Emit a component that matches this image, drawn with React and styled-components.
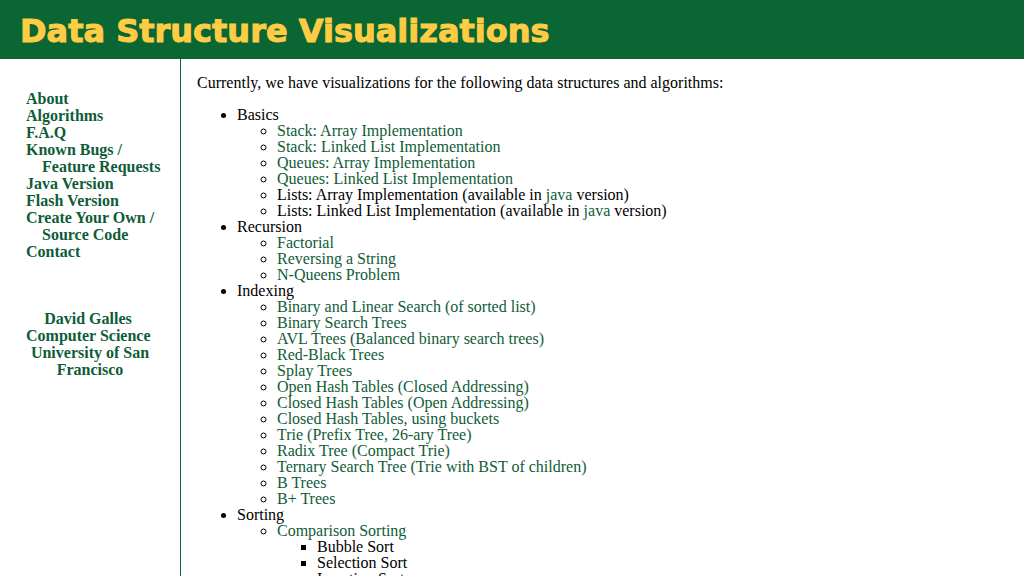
import React from "react";
import styled, { createGlobalStyle } from "styled-components";

const GlobalStyle = createGlobalStyle`
  html { scrollbar-width: none; }
  body {
    margin: 0;
    background: #ffffff;
    color: #000000;
    font: 16px/16px "Liberation Serif", serif;
  }
`;

const Page = styled.div`
  display: flex;
  flex-direction: column;
  min-height: 100vh;
`;

const Header = styled.header`
  background: #0a6633;
  padding: 11px 20px 8px;
`;

const Title = styled.h1`
  margin: 0;
  color: #ffcc44;
  font: bold 32px/40px Verdana, "DejaVu Sans", sans-serif;
  -webkit-text-stroke: 1px #ffcc44;
`;

const Body = styled.div`
  display: flex;
  flex: 1;
`;

const Sidebar = styled.aside`
  box-sizing: border-box;
  flex: none;
  width: 181px;
  padding: 31px 20px 0 26px;
  border-right: 1px solid #0a6633;
  font-weight: bold;
  line-height: 17px;
`;

const Link = styled.a`
  color: #0f5c38;
  text-decoration: none;
`;

const NavLink = styled(Link)`
  display: block;
  white-space: nowrap;
`;

const SecondLine = styled.span`
  display: block;
  padding-left: 16px;
`;

const Credits = styled.address`
  display: flex;
  flex-direction: column;
  margin: 50px 6px 0 0;
  font-style: normal;
  text-align: center;
`;

const CreditLink = styled(Link)`
  padding-right: ${({ $singleLine }) => ($singleLine ? "4px" : "0")};
  white-space: ${({ $singleLine }) => ($singleLine ? "nowrap" : "normal")};
`;

const Content = styled.main`
  flex: 1;
  min-width: 0;
  padding: 16px;
`;

const Intro = styled.p`
  margin: 0 0 16px;
`;

const List = styled.ul`
  margin: 0;
  padding-left: 40px;
`;

const navigation = [
  ["About"],
  ["Algorithms"],
  ["F.A.Q"],
  ["Known Bugs /", "Feature Requests"],
  ["Java Version"],
  ["Flash Version"],
  ["Create Your Own /", "Source Code"],
  ["Contact"],
];

const topics = [
  {
    name: "Basics",
    items: [
      { link: "Stack: Array Implementation" },
      { link: "Stack: Linked List Implementation" },
      { link: "Queues: Array Implementation" },
      { link: "Queues: Linked List Implementation" },
      { java: "Lists: Array Implementation" },
      { java: "Lists: Linked List Implementation" },
    ],
  },
  {
    name: "Recursion",
    items: [{ link: "Factorial" }, { link: "Reversing a String" }, { link: "N-Queens Problem" }],
  },
  {
    name: "Indexing",
    items: [
      { link: "Binary and Linear Search (of sorted list)" },
      { link: "Binary Search Trees" },
      { link: "AVL Trees (Balanced binary search trees)" },
      { link: "Red-Black Trees" },
      { link: "Splay Trees" },
      { link: "Open Hash Tables (Closed Addressing)" },
      { link: "Closed Hash Tables (Open Addressing)" },
      { link: "Closed Hash Tables, using buckets" },
      { link: "Trie (Prefix Tree, 26-ary Tree)" },
      { link: "Radix Tree (Compact Trie)" },
      { link: "Ternary Search Tree (Trie with BST of children)" },
      { link: "B Trees" },
      { link: "B+ Trees" },
    ],
  },
  {
    name: "Sorting",
    items: [
      { link: "Comparison Sorting", children: ["Bubble Sort", "Selection Sort", "Insertion Sort"] },
    ],
  },
];

function TopicItem({ item }) {
  return (
    <li>
      {item.link && <Link href="#">{item.link}</Link>}
      {item.java && (
        <>
          {item.java} (available in <Link href="#">java</Link> version)
        </>
      )}
      {item.children && (
        <List>
          {item.children.map((name) => (
            <li key={name}>{name}</li>
          ))}
        </List>
      )}
    </li>
  );
}

export default function App() {
  return (
    <Page>
      <GlobalStyle />
      <Header>
        <Title>Data Structure Visualizations</Title>
      </Header>
      <Body>
        <Sidebar>
          <nav>
            {navigation.map(([first, second]) => (
              <NavLink href="#" key={first}>
                {first}
                {second && <SecondLine>{second}</SecondLine>}
              </NavLink>
            ))}
          </nav>
          <Credits>
            <CreditLink href="#" $singleLine>David Galles</CreditLink>
            <CreditLink href="#" $singleLine>Computer Science</CreditLink>
            <CreditLink href="#">University of San Francisco</CreditLink>
          </Credits>
        </Sidebar>
        <Content>
          <Intro>Currently, we have visualizations for the following data structures and algorithms:</Intro>
          <List>
            {topics.map((topic) => (
              <li key={topic.name}>
                {topic.name}
                <List>
                  {topic.items.map((item) => (
                    <TopicItem key={item.link || item.java} item={item} />
                  ))}
                </List>
              </li>
            ))}
          </List>
        </Content>
      </Body>
    </Page>
  );
}
